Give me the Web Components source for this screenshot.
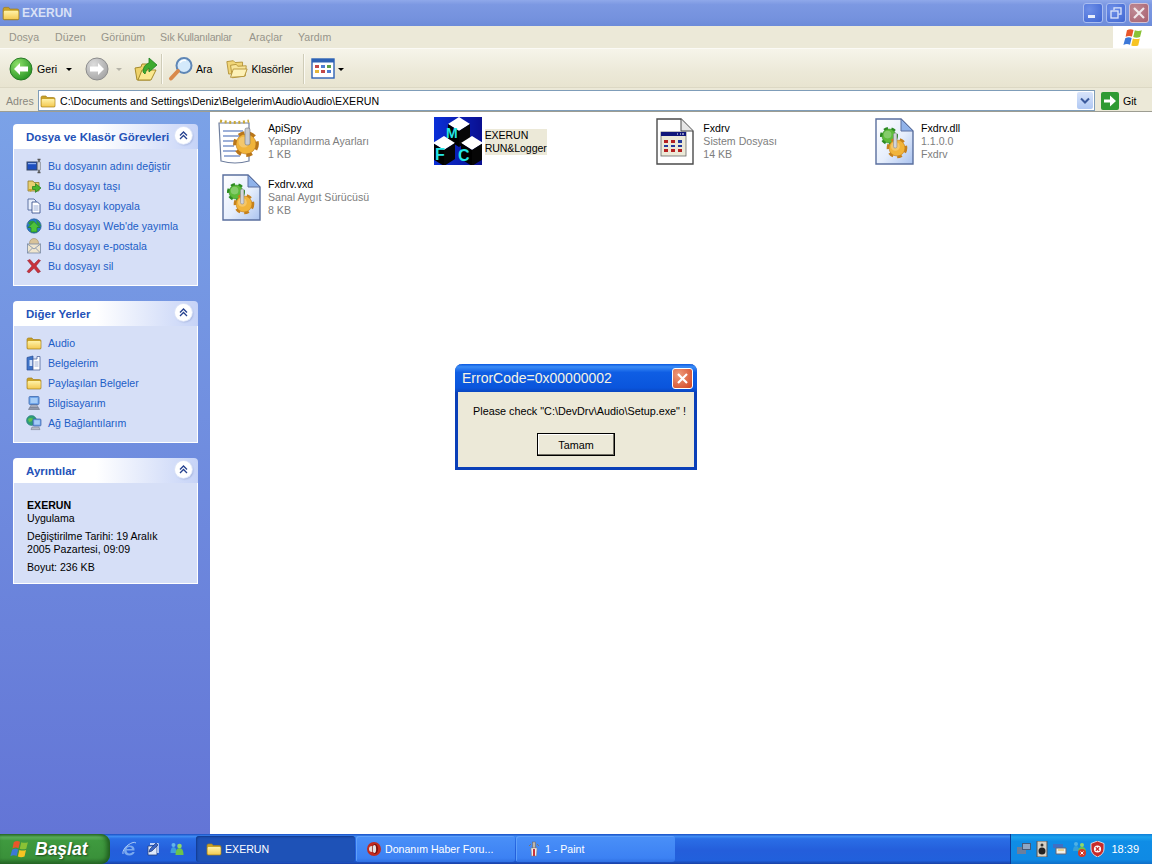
<!DOCTYPE html>
<html lang="tr">
<head>
<meta charset="utf-8">
<title>EXERUN</title>
<style>
  html, body { margin: 0; height: 100%; overflow: hidden; background: #fff; }
  body { font: 10.6px "Liberation Sans", Arial, sans-serif; }
</style>
</head>
<body>
<explorer-window>
  <xp-titlebar slot="title" label="EXERUN"></xp-titlebar>
  <xp-menubar slot="menu"></xp-menubar>
  <xp-toolbar slot="tools"></xp-toolbar>
  <xp-addressbar slot="address" path="C:\Documents and Settings\Deniz\Belgelerim\Audio\Audio\EXERUN"></xp-addressbar>

  <task-panel slot="side" heading="Dosya ve Klasör Görevleri">
    <task-link icon="rename">Bu dosyanın adını değiştir</task-link>
    <task-link icon="move">Bu dosyayı taşı</task-link>
    <task-link icon="copy">Bu dosyayı kopyala</task-link>
    <task-link icon="publish">Bu dosyayı Web'de yayımla</task-link>
    <task-link icon="mail">Bu dosyayı e-postala</task-link>
    <task-link icon="del">Bu dosyayı sil</task-link>
  </task-panel>
  <task-panel slot="side" heading="Diğer Yerler">
    <task-link icon="folder">Audio</task-link>
    <task-link icon="mydocs">Belgelerim</task-link>
    <task-link icon="folder">Paylaşılan Belgeler</task-link>
    <task-link icon="computer">Bilgisayarım</task-link>
    <task-link icon="network">Ağ Bağlantılarım</task-link>
  </task-panel>
  <task-panel slot="side" heading="Ayrıntılar" details>
    <detail-info name="EXERUN" kind="Uygulama" date="Değiştirilme Tarihi: 19 Aralık 2005 Pazartesi, 09:09" size="Boyut: 236 KB"></detail-info>
  </task-panel>

  <file-tile slot="files" icon="config" l1="ApiSpy" l2="Yapılandırma Ayarları" l3="1 KB"></file-tile>
  <file-tile slot="files" icon="mfc" l1="EXERUN" l2="RUN&amp;Logger" selected></file-tile>
  <file-tile slot="files" icon="sys" l1="Fxdrv" l2="Sistem Dosyası" l3="14 KB"></file-tile>
  <file-tile slot="files" icon="dll" l1="Fxdrv.dll" l2="1.1.0.0" l3="Fxdrv"></file-tile>
  <file-tile slot="files" icon="dll" l1="Fxdrv.vxd" l2="Sanal Aygıt Sürücüsü" l3="8 KB"></file-tile>
</explorer-window>

<xp-dialog heading="ErrorCode=0x00000002" message='Please check "C:\DevDrv\Audio\Setup.exe" !' button="Tamam"></xp-dialog>

<xp-taskbar>
  <task-button slot="tasks" icon="folder" active>EXERUN</task-button>
  <task-button slot="tasks" icon="opera">Donanım Haber Foru...</task-button>
  <task-button slot="tasks" icon="paint">1 - Paint</task-button>
</xp-taskbar>

<script>
// Allt hålls i en IIFE så att globala namnrymden inte smutsas ner.
(function () {
  const UI_FONT = '"Liberation Sans", sans-serif';

  const folder = `<path d="M1 4.5 Q1 3 2.5 3H6l1 1.5h6.5Q15 4.5 15 6v7q0 1-1 1H2q-1 0-1-1z" fill="#c9a227" stroke="#a5801c" stroke-width=".7"/>
    <path d="M1.6 7q0-1 1-1h11q1 0 1 1v5.6q0 .8-.8.8H2.4q-.8 0-.8-.8z" fill="url(#fy)"/>
    <defs><linearGradient id="fy" x2="0" y2="1"><stop offset="0" stop-color="#fff2a8"/><stop offset="1" stop-color="#f4cb55"/></linearGradient></defs>`;

  const gear = (cx, cy, r, c1, c2) => `
    <circle cx="${cx}" cy="${cy}" r="${r * 1.08}" fill="none" stroke="${c2}" stroke-width="${r * .42}" stroke-dasharray="${r * .58} ${r * .5}"/>
    <circle cx="${cx}" cy="${cy}" r="${r}" fill="${c1}" stroke="${c2}" stroke-width=".6"/>
    <circle cx="${cx - r * .2}" cy="${cy - r * .2}" r="${r * .55}" fill="#fff" fill-opacity=".25"/>`;

  const dllPage = `
    <defs><linearGradient id="dp" x1="0" y1="0" x2="1" y2="1"><stop offset="0" stop-color="#fff"/><stop offset=".55" stop-color="#e6eefc"/><stop offset="1" stop-color="#a9c2ef"/></linearGradient></defs>
    <path d="M5 2H30L42 14V47H5z" fill="url(#dp)" stroke="#5a6f9e" stroke-width="1.4"/>
    <path d="M30 2V14H42z" fill="#8fb2ea" stroke="#5a6f9e" stroke-width="1"/>
    ${gear(18, 19, 7, '#5dbb3a', '#2c8a22')}
    ${gear(26, 31, 8, '#f1b43a', '#c5811c')}
    <rect x="22.5" y="16" width="3.4" height="15" rx="1.5" fill="#d2d4da" stroke="#7b7f88" stroke-width=".5"/>`;

  // En kub i MFC-ikonen: vit ovansida och svarta sidor.
  const cube = (cx, top) => `
    <path d="M${cx - 11} ${top + 7}L${cx} ${top}L${cx + 11} ${top + 7}L${cx} ${top + 14}z" fill="#fff"/>
    <path d="M${cx - 11} ${top + 7}L${cx} ${top + 14}V${top + 30}L${cx - 11} ${top + 23}z" fill="#000"/>
    <path d="M${cx + 11} ${top + 7}L${cx} ${top + 14}V${top + 30}L${cx + 11} ${top + 23}z" fill="#060606"/>`;

  const ICONS = {
    folder: [16, folder],
    rename: [16, `<rect x="1" y="4" width="10" height="8" fill="#1d4fc0" stroke="#3a4a66"/><rect x="2" y="5" width="8" height="1.2" fill="#8fb0ef"/>
      <path d="M11.5 1.5h3M13 1.5v13M11.5 14.5h3" fill="none" stroke="#555" stroke-width="1.5"/><rect x="11.5" y="4" width="3" height="8" fill="#cfd2d8" stroke="#6b6f78" stroke-width=".5"/>`],
    move: [16, `<path d="M2 3h5l1 1.5h5V13H2z" fill="#e8cf70" stroke="#8f7a2c" stroke-width=".8"/><path d="M6.5 8.5h3V5.6L15 10l-5.5 4.4V11.5h-3z" fill="#49b52d" stroke="#1f7a18" stroke-width=".7"/><path d="M2 11l3 3 1-3z" fill="#c9a227"/>`],
    copy: [16, `<path d="M2 1h6l2 2v9H2z" fill="#e7eefc" stroke="#51669a" stroke-width=".9"/><path d="M6 4h5.5L14 6.5V15H6z" fill="#fff" stroke="#3c5590" stroke-width=".9"/><path d="M7.5 8h5M7.5 10h5M7.5 12h5" stroke="#7d97cc" stroke-width=".8"/>`],
    publish: [16, `<circle cx="8" cy="8" r="7.2" fill="#2a7bc6" stroke="#1d4f8a" stroke-width=".6"/><path d="M2 5q3-3 6-2-1 3-4 4zM10 2q4 2 5 6-3 0-4-2z" fill="#2f9c3a"/><path d="M8 3.5 14 9.5H11V14H5V9.5H2z" fill="#4ec33a" stroke="#1d7f22" stroke-width=".7"/>`],
    mail: [16, `<circle cx="8" cy="5" r="4.5" fill="#d8c39a" stroke="#a58f66" stroke-width=".6"/><rect x="1.5" y="6" width="13" height="9" fill="#efe6cf" stroke="#7a8aa5" stroke-width=".8"/><path d="M1.5 6 8 11l6.5-5M1.5 15 6.5 10M14.5 15 9.5 10" fill="none" stroke="#7a8aa5" stroke-width=".8"/>`],
    del: [16, `<path d="M1.5 2.5 4 1.5 8 6l4.5-4.5 2 1L10 8l4.5 5.5-2.5 1.5L8 10.3 3 15l-2-1.5L6 8z" fill="#c8323c" stroke="#8f1f2e" stroke-width=".5"/>`],
    mydocs: [16, `<path d="M1 2.5 7 1v14H1z" fill="#3f74c8" stroke="#2a4f96" stroke-width=".7"/><rect x="3.5" y="5" width="3" height="6" fill="#cfe0fa"/><path d="M7 4h4V1.5h3V15H7z" fill="#fff" stroke="#51669a" stroke-width=".8"/><path d="M8.5 7h4M8.5 9h4M8.5 11h4" stroke="#8aa0cc" stroke-width=".8"/>`],
    computer: [16, `<path d="M4 1.5h8q1 0 1 1v6q0 1-1 1H4q-1 0-1-1v-6q0-1 1-1z" fill="#6fa5ea" stroke="#3e68ad" stroke-width=".8"/><rect x="4.5" y="3" width="7" height="5" fill="#a6cdf7"/><path d="M5 10h6l1 2H4z" fill="#b6bcc9" stroke="#6b7284" stroke-width=".5"/><path d="M3.5 12.5h9l1 2h-11z" fill="#8f97aa" stroke="#5b6274" stroke-width=".5"/>`],
    network: [16, `<circle cx="5.5" cy="5.5" r="5" fill="#2f9d7a" stroke="#1f6f7f" stroke-width=".5"/><path d="M2 4q3-2 5 0-1 3-4 3z" fill="#63c14d"/><rect x="7" y="4" width="8" height="7" rx="1" fill="#6f9fe3" stroke="#3d62a8" stroke-width=".7"/><rect x="8.2" y="5.2" width="5.6" height="4.4" fill="#a6cdf7"/><path d="M6 12h7l1 2.6H5z" fill="#b6bcc9" stroke="#6b7284" stroke-width=".5"/>`],
    opera: [16, `<circle cx="8" cy="8" r="7" fill="#c22a1f"/><circle cx="6" cy="8" r="3" fill="#e8dfd8"/><ellipse cx="9" cy="8" rx="3" ry="5" fill="#7d120c"/><ellipse cx="8.4" cy="8" rx="1.7" ry="4" fill="#e8e4e4"/>`],
    paint: [16, `<rect x="6.6" y="1" width="2.8" height="6" fill="#c0b8ac" stroke="#6b5f52" stroke-width=".5"/><path d="M5 7h6l-.6 8H5.6z" fill="#f2efe9" stroke="#8a7f72" stroke-width=".5"/><path d="M7 8h2v7H7z" fill="#c8323c"/><path d="M3 5 5 3M13 5l-2-2" stroke="#7d7468" stroke-width="1"/>`],
    ie: [16, `<path d="M13.5 9.5H5.5q.5 3 3 3 2 0 3-1.4h2.2q-1.2 3.4-5.2 3.4Q3 14.5 3 9.5 3 4.5 8.5 4.5 14 4.5 13.5 9.5zM5.6 8H11q-.2-2-2.6-2-2.3 0-2.8 2z" fill="#7aa9ee"/><path d="M2 13q-1-4 5-9 6-4 8-2" fill="none" stroke="#a9c8f5" stroke-width="1"/>`],
    desktop: [16, `<path d="M3 5h9v9H3z" fill="#dfe8fa" stroke="#25407d" stroke-width=".8"/><path d="M5 3h8v9" fill="none" stroke="#eef3ff" stroke-width="1.4"/><path d="M5 8l6-6 2 2-6 6-3 1z" fill="#3a64c2" stroke="#10286a" stroke-width=".6"/>`],
    msn: [16, `<circle cx="4.5" cy="4" r="2" fill="#63b7e8"/><path d="M1.5 12q0-6 3-6t3 6z" fill="#3f9fdc"/><circle cx="10.5" cy="5" r="2.3" fill="#8fd96a"/><path d="M6.5 14q0-7 4-7t4 7z" fill="#6cc34a"/>`],
    flag: [16, `<path d="M3 2.5q2.5-1.500 5-.3L6.800 7.300Q4.500 6.300 2 7.500z" fill="#e8562a"/><path d="M9 2.500q2.700 1 5.300 0L13 7.700q-2.700 1-5.200 0z" fill="#8ac235"/><path d="M1.700 8.500q2.600-1.300 4.900-.2L5.300 13.500q-2.500-1.100-5 .2z" fill="#3c78d8"/><path d="M7.500 8.700q2.700 1 5.300 0l-1.200 5.300q-2.700 1-5.300 0z" fill="#f7c423"/>`],
    up: [24, `<path d="M1 11l6-1 1-3 8 0v16H3z" fill="#efd269" stroke="#a58a2a"/><path d="M4 23 8 13h14l-5 10z" fill="#fbe88f" stroke="#a58a2a"/><path d="M9 15q0-7 6-9V1l8 7-8 7V11q-3 1-4 6z" fill="#3eab2e" stroke="#1d7f22" stroke-width=".8"/>`],
    search: [26, `<circle cx="16" cy="9.5" r="7.5" fill="#d4e9fb" stroke="#5e86b5" stroke-width="2"/><path d="M12 6.5q2-3 6-2" stroke="#fff" stroke-width="1.5" fill="none"/><path d="M10 15 3 22.5" stroke="#d9894a" stroke-width="4" stroke-linecap="round"/>`],
    folders: [26, `<path d="M2 5l7-1 2 2 8-.5v11l-15 2z" fill="#f0d577" stroke="#b4943a"/><path d="M6 9l6-1 2 2 9-.5-1 11-14 2z" fill="#f8e59a" stroke="#b4943a"/><path d="M6 22 9 13h15l-3 8z" fill="#fdf1b7" stroke="#b4943a"/>`],
    views: [24, `<rect x="1" y="2" width="22" height="19" fill="#fff" stroke="#2d62b5" stroke-width="1.4"/><rect x="1" y="2" width="22" height="3.5" fill="#2d62b5"/><path d="M4 8h4v3H4z" fill="#c24848"/><path d="M10 8h4v3h-4z" fill="#4e7dd0"/><path d="M16 8h4v3h-4z" fill="#5aa04a"/><path d="M4 13h4v3H4z" fill="#e4b53a"/><path d="M10 13h4v3h-4z" fill="#c24848"/><path d="M16 13h4v3h-4z" fill="#4e7dd0"/>`],
    config: [48, `<path d="M1 6H31V44Q17 48 3 44z" fill="#fff" stroke="#6f7f9f" stroke-width="1.2"/>
      <path d="M2 4q15 3 29 0" fill="none" stroke="#c9a835" stroke-width="3" stroke-dasharray="2 2.6"/>
      <path d="M5 14H25M5 19H22M5 24H18M5 29H16M5 34H18M6 39H22" stroke="#7d97cc" stroke-width="1.4"/>
      ${gear(28, 27, 10, '#f1b43a', '#b9761a')}
      <rect x="27" y="11" width="5" height="17" rx="1.8" fill="#c9ccd2" stroke="#6f737c" stroke-width=".6"/>`],
    sys: [48, `<path d="M4 2H28L40 14V47H4z" fill="#fff" stroke="#4b4b4b" stroke-width="1.4"/><path d="M28 2V14H40" fill="#e6e6e6" stroke="#4b4b4b"/>
      <rect x="8" y="15" width="25" height="24" fill="#ece9d8" stroke="#666" stroke-width=".8"/><rect x="8" y="15" width="25" height="4" fill="#10167a"/><path d="M24 17h1M27 17h1M29 17h2" stroke="#fff"/>
      <g fill="#b52020"><rect x="11" y="23" width="4" height="3"/><rect x="18" y="23" width="4" height="3"/><rect x="11" y="32" width="4" height="3"/><rect x="18" y="32" width="4" height="3"/><rect x="25" y="32" width="4" height="3"/></g>
      <g fill="#243a9c"><rect x="25" y="23" width="4" height="3"/><rect x="11" y="28" width="4" height="2"/><rect x="18" y="28" width="4" height="2"/><rect x="25" y="28" width="4" height="2"/></g>`],
    dll: [48, dllPage],
    mfc: [48, `<defs><linearGradient id="mb" x1="0" y1="0" x2="1" y2="0"><stop offset="0" stop-color="#0a2fd8"/><stop offset="1" stop-color="#0a0f90"/></linearGradient></defs>
      <rect width="48" height="48" fill="url(#mb)"/>
      ${cube(25, 0)}${cube(10, 19)}${cube(38, 19)}
      <g fill="#25e6e6" font-family="Liberation Sans, sans-serif" font-weight="700"><text x="12" y="21" font-size="14">M</text><text x="1" y="43" font-size="16">F</text><text x="24" y="44" font-size="16">C</text></g>`]
  };

  class XpIcon extends HTMLElement {
    connectedCallback() {
      const name = this.getAttribute('name');
      const size = this.getAttribute('size') || 16;
      const [box, body] = ICONS[name];
      this.attachShadow({mode: 'open'}).innerHTML = `
      <style>:host { display: inline-flex; flex: none; width: ${size}px; height: ${size}px; } svg { display: block; }</style>
      <svg width="${size}" height="${size}" viewBox="0 0 ${box} ${box}">${body}</svg>`;
    }
  }

  class ExplorerWindow extends HTMLElement {
    constructor() {
      super();
      this.attachShadow({mode: 'open'}).innerHTML = `
      <style>
      :host { display: flex; flex-direction: column; height: 834px; }
      .main { flex: 1; display: flex; min-height: 0; }
      .side {
        width: 210px; flex: none; box-sizing: border-box;
        padding: 12px 12px 0 13px; display: flex; flex-direction: column; gap: 15px;
        background: linear-gradient(#7ba2e7, #6375d6);
      }
      .content { flex: 1; display: grid; grid-template-columns: repeat(4, 217.67px); grid-auto-rows: 56px; align-content: start; padding: 5px 0 0 8px; background: #fff; }
      ::slotted(task-panel) { flex: none; }
      </style>
      <slot name="title"></slot>
      <slot name="menu"></slot>
      <slot name="tools"></slot>
      <slot name="address"></slot>
      <div class="main">
        <div class="side"><slot name="side"></slot></div>
        <div class="content"><slot name="files"></slot></div>
      </div>`;
    }
  }

  class XpTitlebar extends HTMLElement {
    connectedCallback() {
      this.attachShadow({mode: 'open'}).innerHTML = `
      <style>
      :host { display: flex; align-items: center; height: 26px; flex: none; padding: 0 3px 0 2px; box-sizing: border-box;
        background: linear-gradient(#8fa8ea 0, #7c98e2 18%, #7592de 70%, #6c8bd9 100%); }
      .t { margin-left: 2px; flex: 1; font: bold 12px ${UI_FONT}; color: #d9e1f6; }
      .b { width: 20px; height: 20px; margin-left: 3px; border-radius: 3px; box-sizing: border-box; border: 1px solid #a9bdf0;
        background: radial-gradient(circle at 30% 30%, #6e8fe8, #3f66d2); display: flex; align-items: center; justify-content: center; }
      .b.x { background: radial-gradient(circle at 30% 30%, #bf8a95, #a8606f); border-color: #d6c0d0; }
      svg { display: block; }
      </style>
      <xp-icon name="folder" size="18"></xp-icon>
      <span class="t">${this.getAttribute('label')}</span>
      <span class="b"><svg width="14" height="14"><rect x="2" y="9" width="7" height="3" fill="#e8eefc"/></svg></span>
      <span class="b"><svg width="14" height="14" fill="none" stroke="#dfe7fb" stroke-width="1.3"><path d="M5 4V1.800h7v6.400H9.500"/><rect x="2" y="5" width="7" height="7"/></svg></span>
      <span class="b x"><svg width="14" height="14" stroke="#f0e6ea" stroke-width="2.2"><path d="M2 2l10 10M12 2 2 12"/></svg></span>`;
    }
  }

  class XpMenubar extends HTMLElement {
    connectedCallback() {
      const items = ['Dosya', 'Düzen', 'Görünüm', 'Sık Kullanılanlar', 'Araçlar', 'Yardım'];
      this.attachShadow({mode: 'open'}).innerHTML = `
      <style>
      :host { display: flex; align-items: center; height: 23px; flex: none; box-sizing: border-box; background: #ece9d8; border-bottom: 1px solid #fbfaf5; color: #96948a; font: 10.6px ${UI_FONT}; }
      ul { display: grid; grid-template-columns: 46px 46px 59px 89px 49px auto; flex: 1; margin: 0; padding: 0 0 0 9px; list-style: none; white-space: nowrap; }
      li:nth-child(4) { letter-spacing: -.28px; }
      .logo { width: 39px; height: 100%; background: #fff; display: flex; align-items: center; justify-content: center; padding-left: 1px; box-sizing: border-box; }
      </style>
      <ul>${items.map(i => `<li>${i}</li>`).join('')}</ul>
      <div class="logo"><xp-icon name="flag" size="21"></xp-icon></div>`;
    }
  }

  class XpToolbar extends HTMLElement {
    connectedCallback() {
      const circle = (fill, stroke) => `<svg width="24" height="24" viewBox="0 0 24 24">
        <circle cx="12" cy="12" r="11" fill="${fill}" stroke="${stroke}" stroke-width="1"/>
        <path d="M5 12 11 6v3.500h8v5h-8V18z" transform="${fill === 'url(#g1)' ? '' : 'translate(24 0) scale(-1 1)'}" fill="#fff"/>
        <defs><radialGradient id="g1" cx=".35" cy=".3" r=".8"><stop offset="0" stop-color="#8fe06a"/><stop offset="1" stop-color="#1f8f1e"/></radialGradient>
        <radialGradient id="g2" cx=".35" cy=".3" r=".8"><stop offset="0" stop-color="#dcdcdc"/><stop offset="1" stop-color="#a2a2a2"/></radialGradient></defs></svg>`;
      this.attachShadow({mode: 'open'}).innerHTML = `
      <style>
      :host { display: flex; align-items: center; height: 39px; flex: none; box-sizing: border-box; padding: 2px 0 0 9px;
        background: linear-gradient(#f6f4ea, #ece9d8 60%, #e8e4d0); border-bottom: 1px solid #dcd8c4; color: #000; font: 10.6px ${UI_FONT}; }
      svg { display: block; }
      .arrow { width: 0; height: 0; border: 3px solid transparent; border-top: 3px solid #000; border-bottom: 0; }
      .arrow.off { border-top-color: #b5b3a8; }
      .sep { width: 1px; height: 30px; background: #cfccb8; box-shadow: 1px 0 #fbfaf3; }
      </style>
      ${circle('url(#g1)', '#2a7a28')}
      <span style="margin-left:4px">Geri</span>
      <span class="arrow" style="margin-left:9px"></span>
      <span style="margin-left:13px">${circle('url(#g2)', '#8d8d8d')}</span>
      <span class="arrow off" style="margin-left:7px"></span>
      <xp-icon name="up" size="24" style="margin-left:12px"></xp-icon>
      <span class="sep" style="margin-left:3px"></span>
      <xp-icon name="search" size="26" style="margin-left:6px"></xp-icon>
      <span style="margin-left:2px">Ara</span>
      <xp-icon name="folders" size="24" style="margin-left:12px"></xp-icon>
      <span style="margin-left:3px">Klasörler</span>
      <span class="sep" style="margin-left:10px"></span>
      <xp-icon name="views" size="24" style="margin-left:7px"></xp-icon>
      <span class="arrow" style="margin-left:3px"></span>`;
    }
  }

  class XpAddressbar extends HTMLElement {
    connectedCallback() {
      this.attachShadow({mode: 'open'}).innerHTML = `
      <style>
      :host { display: flex; align-items: center; height: 24px; flex: none; box-sizing: border-box; padding: 2px 0 0 6px; background: #ece9d8; border-bottom: 1px solid #9d9d92; font: 10.6px ${UI_FONT}; }
      .lbl { width: 32px; color: #8a887e; }
      .box { flex: 1; height: 21px; box-sizing: border-box; margin-right: 6px; display: flex; align-items: center; gap: 4px; background: #fff; border: 1px solid #7f9db9; padding-left: 1px; color: #000; }
      .path { flex: 1; white-space: nowrap; }
      .drop { width: 16px; height: 17px; margin-right: 1px; border-radius: 2px; background: linear-gradient(#d8e4fb, #b0c8f3); display: flex; align-items: center; justify-content: center; }
      .go { display: flex; align-items: center; gap: 4px; width: 51px; }
      svg { display: block; }
      </style>
      <span class="lbl">Adres</span>
      <div class="box">
        <xp-icon name="folder" size="16"></xp-icon>
        <span class="path">${this.getAttribute('path')}</span>
        <span class="drop"><svg width="10" height="8" fill="none" stroke="#3b5a9c" stroke-width="2"><path d="M1 1.500 5 5.500 9 1.500"/></svg></span>
      </div>
      <div class="go">
        <svg width="18" height="18"><rect width="18" height="18" rx="2" fill="#2f9a33"/><path d="M3 7.500h6V3.500L15 9l-6 5.500V10.500H3z" fill="#fff"/></svg>
        <span>Git</span>
      </div>`;
    }
  }

  class TaskPanel extends HTMLElement {
    connectedCallback() {
      const details = this.hasAttribute('details');
      this.attachShadow({mode: 'open'}).innerHTML = `
      <style>
      :host { display: block; }
      .head { height: 25px; box-sizing: border-box; display: flex; align-items: center; padding: 0 6px 0 13px; border-radius: 4px 4px 0 0;
        background: linear-gradient(90deg, #fff 45%, #c6d3f7); color: #2452b8; font: bold 11.5px ${UI_FONT}; }
      .head span { flex: 1; white-space: nowrap; padding-top: 1px; }
      .chev { width: 17px; height: 17px; flex: none; border-radius: 50%; background: #fff; box-shadow: 0 0 0 1px #dbe3f8, 1px 1px 2px #8fa0cf; display: flex; align-items: center; justify-content: center; margin-top: -3px; }
      .chev svg { display: block; }
      .body { box-sizing: border-box; background: #d6dff7; border: 1px solid #fff; border-top: 0; padding: ${details ? '16px 22px 9px 13px' : '7px 0 9px 12px'}; }
      </style>
      <div class="head"><span>${this.getAttribute('heading')}</span>
        <div class="chev"><svg width="9" height="9" fill="none" stroke="#25418f" stroke-width="1.3"><path d="M1 4.500 4.500 1 8 4.500M1 8 4.500 4.500 8 8"/></svg></div>
      </div>
      <div class="body"><slot></slot></div>`;
    }
  }

  class TaskLink extends HTMLElement {
    connectedCallback() {
      this.attachShadow({mode: 'open'}).innerHTML = `
      <style>
      :host { display: flex; align-items: center; height: 20px; gap: 6px; color: #215dc6; font: 10.6px ${UI_FONT}; white-space: nowrap; }
      </style>
      <xp-icon name="${this.getAttribute('icon')}" size="16"></xp-icon><span><slot></slot></span>`;
    }
  }

  class DetailInfo extends HTMLElement {
    connectedCallback() {
      this.attachShadow({mode: 'open'}).innerHTML = `
      <style>
      :host { display: block; color: #000; font: 10.6px/13px ${UI_FONT}; }
      b, p { display: block; margin: 0; }
      .gap { margin-top: 5px; }
      </style>
      <b>${this.getAttribute('name')}</b>
      <p>${this.getAttribute('kind')}</p>
      <p class="gap">${this.getAttribute('date')}</p>
      <p class="gap">${this.getAttribute('size')}</p>`;
    }
  }

  class FileTile extends HTMLElement {
    connectedCallback() {
      const l3 = this.getAttribute('l3');
      const sel = this.hasAttribute('selected');
      this.attachShadow({mode: 'open'}).innerHTML = `
      <style>
      :host { display: flex; align-items: center; height: 48px; gap: 2px; font: 10.6px/13px ${UI_FONT}; color: #000; }
      .t { white-space: nowrap; }
      .t.sel { background: #ece9d8; margin-top: 2px; letter-spacing: -.1px; }
      .sub { color: #7d7d7d; }
      .sel .sub { color: #000; }
      </style>
      <xp-icon name="${this.getAttribute('icon')}" size="48" ${sel ? 'style="margin:0 1px 0 -2px"' : ''}></xp-icon>
      <div class="t ${sel ? 'sel' : ''}">
        <div>${this.getAttribute('l1').replace('&', '&amp;')}</div>
        <div class="sub">${this.getAttribute('l2').replace('&', '&amp;')}</div>
        ${l3 ? `<div class="sub">${l3}</div>` : ''}
      </div>`;
    }
  }

  class XpDialog extends HTMLElement {
    connectedCallback() {
      this.attachShadow({mode: 'open'}).innerHTML = `
      <style>
      :host { position: absolute; left: 455px; top: 364px; width: 242px; height: 106px; box-sizing: border-box; display: flex; flex-direction: column;
        border: 3px solid #0a3fb8; border-top: 0; border-radius: 7px 7px 0 0; background: #ece9d8; font: 10.8px ${UI_FONT}; color: #000; }
      .bar { height: 28px; flex: none; margin: 0 -3px; border-radius: 7px 7px 0 0; display: flex; align-items: center; padding: 0 4px 0 7px;
        background: linear-gradient(#0a58e0 0, #3b8cf6 10%, #0f5ee4 30%, #0a55dc 85%, #0a46c0); color: #f6f3e4; font: 14px ${UI_FONT}; }
      .bar span { flex: 1; }
      .x { width: 21px; height: 21px; box-sizing: border-box; border: 1px solid #fff; border-radius: 3px; background: radial-gradient(circle at 30% 30%, #ef9c7c, #d1421f); display: flex; align-items: center; justify-content: center; }
      .msg { text-align: center; margin-top: 13px; padding-left: 7px; white-space: nowrap; }
      button { display: block; margin: 16px auto 0; width: 78px; height: 23px; padding: 0; background: #ece9d8; border: 1px solid #000; box-shadow: inset -1px -1px #716f64, inset 1px 1px #fff; font: inherit; color: inherit; }
      svg { display: block; }
      </style>
      <div class="bar"><span>${this.getAttribute('heading')}</span>
        <div class="x"><svg width="13" height="13" stroke="#fff" stroke-width="2.2"><path d="M2 2l9 9M11 2l-9 9"/></svg></div>
      </div>
      <div class="msg">${this.getAttribute('message')}</div>
      <button>${this.getAttribute('button')}</button>`;
    }
  }

  class XpTaskbar extends HTMLElement {
    connectedCallback() {
      const quick = ['ie', 'desktop', 'msn'];
      const tray = `
        <svg width="16" height="16"><rect x="1" y="6" width="9" height="7" fill="#6b7f9c"/><rect x="6" y="2" width="9" height="7" fill="#465a78"/><rect x="7" y="3" width="7" height="5" fill="#8fa6c4"/></svg>
        <svg width="14" height="16"><rect x="2" y="0" width="10" height="16" fill="#d6d0c4" stroke="#555"/><circle cx="7" cy="10" r="3.5" fill="#222"/><circle cx="7" cy="4" r="1.5" fill="#333"/></svg>
        <svg width="16" height="16"><path d="M1 3h10v4H1z" fill="#3f6fc4"/><path d="M4 7h10v6H4z" fill="#f1efe6" stroke="#667"/><path d="M6 9h6" stroke="#e4b53a"/></svg>
        <svg width="16" height="16"><circle cx="5" cy="3" r="2" fill="#4fb1e5"/><path d="M2 10q0-5 3-5t3 5z" fill="#36a0d8"/><circle cx="11" cy="4" r="2" fill="#8fd96a"/><path d="M7 11q0-5 4-5t4 5z" fill="#6cc34a"/><circle cx="11" cy="12" r="4" fill="#d43a2a"/><path d="M9.5 10.5l3 3M12.5 10.5l-3 3" stroke="#fff"/></svg>
        <svg width="15" height="16"><path d="M7.5 0 14 2.5V8q0 5-6.5 8Q1 13 1 8V2.5z" fill="#c82a2a" stroke="#f2f2f2" stroke-width=".8"/><circle cx="7.5" cy="8" r="3.6" fill="#fff"/><path d="M5.8 6.3l3.4 3.4M9.2 6.3 5.8 9.7" stroke="#c82a2a" stroke-width="1.3"/></svg>`;
      this.attachShadow({mode: 'open'}).innerHTML = `
      <style>
      :host { position: absolute; left: 0; right: 0; top: 834px; height: 30px; display: flex; align-items: stretch;
        background: linear-gradient(#1a4fc4 0, #3f8cf3 8%, #2a6ee6 16%, #245edb 55%, #2160dc 88%, #1941a5 100%);
        font: 10.6px ${UI_FONT}; color: #fff; }
      .start { width: 110px; flex: none; box-sizing: border-box; display: flex; align-items: center; gap: 5px; padding-left: 10px; border-radius: 0 9px 9px 0;
        background: linear-gradient(#2f7a2f 0, #5fb35f 10%, #3f9a3f 22%, #3a913a 80%, #2c6f2c 100%); box-shadow: inset -3px 0 5px #1e5a1e;
        font: italic bold 17.5px ${UI_FONT}; text-shadow: 1px 1px 2px #1c4a1c; }
      .quick { width: 86px; flex: none; display: flex; align-items: center; justify-content: center; gap: 8px; }
      .tasks { flex: 1; display: flex; align-items: center; gap: 1px; }
      .tray { width: 142px; flex: none; box-sizing: border-box; display: flex; align-items: center; gap: 3px; padding-left: 5px; border-left: 1px solid #0e3a96;
        background: linear-gradient(#0f7fd8 0, #1ca2ee 10%, #0f8de6 25%, #0f8ae4 85%, #0f6ec8 100%); }
      .clock { margin-left: auto; margin-right: 13px; font-size: 11px; }
      svg { display: block; }
      </style>
      <div class="start"><xp-icon name="flag" size="20"></xp-icon>Başlat</div>
      <div class="quick">${quick.map(q => `<xp-icon name="${q}" size="16"></xp-icon>`).join('')}</div>
      <div class="tasks"><slot name="tasks"></slot></div>
      <div class="tray">${tray}<span class="clock">18:39</span></div>`;
    }
  }

  class TaskButton extends HTMLElement {
    connectedCallback() {
      const active = this.hasAttribute('active');
      this.attachShadow({mode: 'open'}).innerHTML = `
      <style>
      :host { display: flex; align-items: center; width: 159px; height: 26px; box-sizing: border-box; gap: 3px; padding-left: 10px; border-radius: 3px; white-space: nowrap;
        background: ${active ? '#1e52b7' : 'linear-gradient(#4a90f8, #3c81f3 85%, #2f70e2)'};
        box-shadow: ${active ? 'inset 1px 1px 2px #123a8c' : 'inset 1px 1px 0 #5fa0fa'}; }
      </style>
      <xp-icon name="${this.getAttribute('icon')}" size="16"></xp-icon><span><slot></slot></span>`;
    }
  }

  // Registrera alla element efter att klasserna finns.
  customElements.define('xp-icon', XpIcon);
  customElements.define('xp-titlebar', XpTitlebar);
  customElements.define('xp-menubar', XpMenubar);
  customElements.define('xp-toolbar', XpToolbar);
  customElements.define('xp-addressbar', XpAddressbar);
  customElements.define('task-link', TaskLink);
  customElements.define('detail-info', DetailInfo);
  customElements.define('task-panel', TaskPanel);
  customElements.define('file-tile', FileTile);
  customElements.define('explorer-window', ExplorerWindow);
  customElements.define('xp-dialog', XpDialog);
  customElements.define('task-button', TaskButton);
  customElements.define('xp-taskbar', XpTaskbar);
})();
</script>
</body>
</html>
